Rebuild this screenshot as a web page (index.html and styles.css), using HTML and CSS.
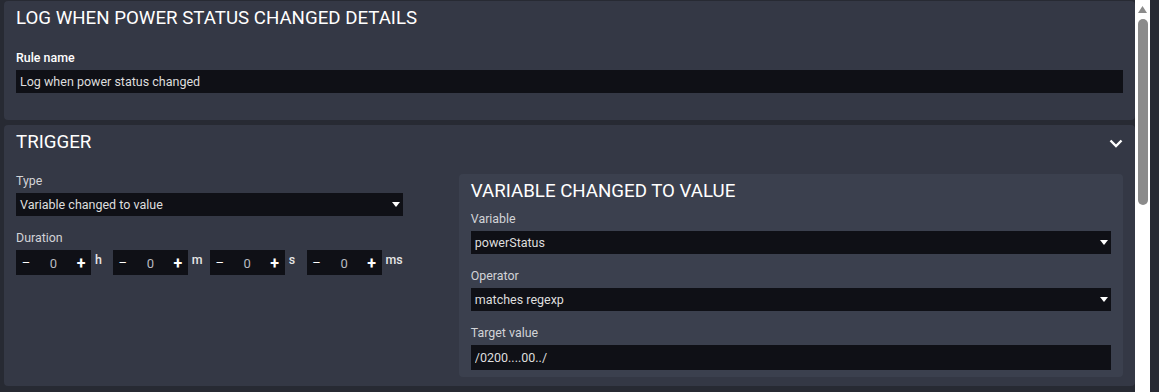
FILE: index.html
```html
<!DOCTYPE html>
<html lang="en">
<head>
    <meta charset="UTF-8">
    <meta name="viewport" content="width=device-width, initial-scale=1.0">
    <title>Rule details</title>
    <link rel="stylesheet" href="styles.css">
</head>
<body>
    <div class="layout">
        <main class="content">
            <section class="card card-details">
                <h2 class="card-title">Log when power status changed details</h2>
                <div class="field field-first">
                    <label class="label label-strong" for="ruleName">Rule name</label>
                    <input class="control" id="ruleName" type="text" value="Log when power status changed">
                </div>
            </section>

            <section class="card card-trigger">
                <div class="card-header">
                    <h2 class="card-title">Trigger</h2>
                    <svg class="chevron" width="14" height="9" viewBox="0 0 14 9">
                        <path d="M1.5 1.5 L7 7 L12.5 1.5" fill="none" stroke="#fff" stroke-width="2.4"/>
                    </svg>
                </div>

                <div class="trigger-grid">
                    <div class="trigger-left">
                        <div class="field">
                            <div class="label">Type</div>
                            <div class="control select">
                                <span>Variable changed to value</span>
                                <svg class="caret" width="8" height="5" viewBox="0 0 8 5"><path d="M0 0 H8 L4 5 Z" fill="#fff"/></svg>
                            </div>
                        </div>
                        <div class="field">
                            <div class="label">Duration</div>
                            <div class="durations">
                                <div class="duration">
                                    <div class="stepper"><span class="step-btn">–</span><span class="step-value">0</span><span class="step-btn plus">+</span></div>
                                    <span class="unit">h</span>
                                </div>
                                <div class="duration">
                                    <div class="stepper"><span class="step-btn">–</span><span class="step-value">0</span><span class="step-btn plus">+</span></div>
                                    <span class="unit">m</span>
                                </div>
                                <div class="duration">
                                    <div class="stepper"><span class="step-btn">–</span><span class="step-value">0</span><span class="step-btn plus">+</span></div>
                                    <span class="unit">s</span>
                                </div>
                                <div class="duration">
                                    <div class="stepper"><span class="step-btn">–</span><span class="step-value">0</span><span class="step-btn plus">+</span></div>
                                    <span class="unit">ms</span>
                                </div>
                            </div>
                        </div>
                    </div>

                    <div class="panel">
                        <h3 class="panel-title">Variable changed to value</h3>
                        <div class="field">
                            <div class="label">Variable</div>
                            <div class="control select">
                                <span>powerStatus</span>
                                <svg class="caret" width="8" height="5" viewBox="0 0 8 5"><path d="M0 0 H8 L4 5 Z" fill="#fff"/></svg>
                            </div>
                        </div>
                        <div class="field">
                            <div class="label">Operator</div>
                            <div class="control select">
                                <span>matches regexp</span>
                                <svg class="caret" width="8" height="5" viewBox="0 0 8 5"><path d="M0 0 H8 L4 5 Z" fill="#fff"/></svg>
                            </div>
                        </div>
                        <div class="field field-last">
                            <label class="label" for="targetValue">Target value</label>
                            <input class="control control-tall" id="targetValue" type="text" value="/0200....00../">
                        </div>
                    </div>
                </div>
            </section>
        </main>

        <div class="scrollbar">
            <svg class="scroll-arrow" width="9" height="7" viewBox="0 0 9 7"><path d="M4.5 0 L9 7 H0 Z" fill="#8b8b8b"/></svg>
            <div class="scroll-thumb"></div>
        </div>
    </div>
</body>
</html>
```

FILE: styles.css
```css
body {
    margin: 0;
    background-color: #272a33;
    font-family: Roboto, "Noto Sans", sans-serif;
    overflow: hidden;
}

.layout {
    display: flex;
    height: 392px;
}

.content {
    width: 1135px;
    box-sizing: border-box;
    padding: 1px 0 0 4px;
    overflow: hidden;
}

.scrollbar {
    width: 15px;
    background-color: #fff;
    display: flex;
    flex-direction: column;
    align-items: center;
    padding-top: 6px;
    box-sizing: border-box;
}

.scroll-arrow {
    display: block;
}

.scroll-thumb {
    width: 10px;
    height: 186px;
    margin-top: 6px;
    border-radius: 5px;
    background-color: #8b8b8b;
}

.card {
    background-color: #343845;
    border-radius: 4px;
    padding: 7px 12px 12px;
    margin-bottom: 5px;
}

.card-details {
    padding-bottom: 27px;
}

.card-trigger {
    padding-bottom: 9px;
}

.card-header {
    display: flex;
    justify-content: space-between;
    align-items: center;
}

.card-title {
    margin: 0;
    font-size: 18.7px;
    font-weight: 400;
    line-height: 21px;
    color: #fff;
    text-transform: uppercase;
}

.chevron {
    display: block;
    margin-top: 1px;
}

.field {
    margin-bottom: 15px;
}

.field-first {
    margin-top: 22px;
    margin-bottom: 0;
}

.field-last {
    margin-bottom: 0;
}

.label {
    display: block;
    font-size: 12.4px;
    line-height: 14px;
    color: #d2d3d7;
    margin-bottom: 5px;
}

.label-strong {
    font-weight: 500;
    color: #fff;
}

.control {
    display: flex;
    align-items: center;
    width: 100%;
    height: 23px;
    box-sizing: border-box;
    padding: 0 3px 0 4px;
    border: none;
    outline: none;
    background-color: #0f1016;
    color: #dedede;
    font-family: inherit;
    font-size: 12.5px;
}

.control-tall {
    height: 25px;
}

.select {
    justify-content: space-between;
}

.caret {
    display: block;
}

.trigger-grid {
    display: grid;
    grid-template-columns: 35% 60%;
    justify-content: space-between;
    align-items: start;
    margin-top: 21px;
}

.durations {
    display: flex;
}

.duration {
    display: flex;
    align-items: flex-start;
    width: 97px;
}

.stepper {
    display: flex;
    width: 75px;
    height: 25px;
    background-color: #0f1016;
}

.step-btn {
    width: 20px;
    display: flex;
    align-items: center;
    justify-content: center;
    color: #fff;
    font-size: 13px;
}

.step-btn.plus {
    font-size: 16px;
    font-weight: 700;
    padding-top: 2px;
}

.step-value {
    width: 35px;
    display: flex;
    align-items: center;
    justify-content: center;
    color: #b9bbc0;
    font-size: 13px;
    padding-top: 1px;
}

.unit {
    margin-left: 4px;
    padding-top: 3px;
    font-size: 12.4px;
    font-weight: 500;
    line-height: 14px;
    color: #e6e6e6;
}

.panel {
    background-color: #3b404e;
    border-radius: 4px;
    padding: 7px 12px 7px;
}

.panel-title {
    margin: 0 0 10px;
    font-size: 18.7px;
    font-weight: 400;
    line-height: 21px;
    color: #fff;
    text-transform: uppercase;
}
```
